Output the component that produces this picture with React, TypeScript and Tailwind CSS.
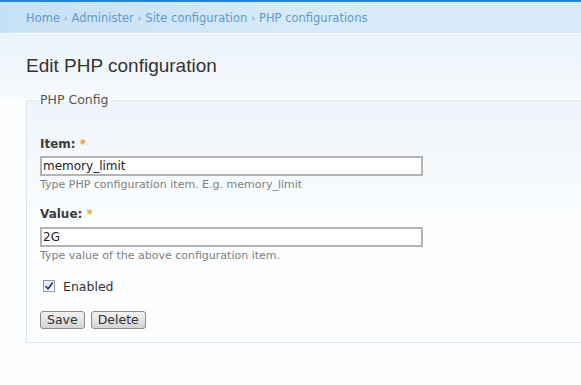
import React from 'react';

const font = { fontFamily: '"DejaVu Sans", Verdana, sans-serif' };

export default function App() {
  return (
    <div className="w-[581px] h-[385px] overflow-hidden bg-[#fdfeff] font-['DejaVu_Sans',Verdana,sans-serif] text-[#444]">
      <div className="h-[2px] bg-[#2f7fcf]" />
      <div className="h-[32px] flex items-center pl-[26px] pt-[2px] text-[11.5px] text-[#6498cc] bg-gradient-to-r from-[#c6e0f5] via-[#d6eaf8] to-[#d6eaf8] border-b border-[#f4f9fd] shadow-[0_1px_0_#e6eef5]">
        <span>Home</span>
        <span className="mx-[4px] text-[9px]">›</span>
        <span>Administer</span>
        <span className="mx-[4px] text-[9px]">›</span>
        <span>Site configuration</span>
        <span className="mx-[4px] text-[9px]">›</span>
        <span>PHP configurations</span>
      </div>
      <div className="bg-gradient-to-b from-[#eaf2fa] to-[#f7fafd] h-[65px] pl-[26px] pt-[20px]">
        <h1 className="font-['Liberation_Sans',Arial,sans-serif] text-[19px] text-[#333] leading-[24px]">Edit PHP configuration</h1>
      </div>
      <fieldset className="ml-[26px] -mt-[8px] border border-r-0 border-[#dde6ee] bg-gradient-to-b from-[#eef4fa] via-[#fbfdfe] to-[#fdfeff] pl-[13px] pr-0 pt-[26px] pb-[13px]">
        <legend className="-ml-[1px] px-[1px] text-[12.5px] text-[#555]" style={font}>PHP Config</legend>
        <div className="flex flex-col">
          <label className="text-[12px] font-bold text-[#3a3a3a] leading-[16px]">
            Item: <span className="text-[#f0a020]">*</span>
          </label>
          <input
            readOnly
            value="memory_limit"
            className="mt-[4px] w-[383px] h-[20px] border-2 border-[#b4b4b4] px-[1px] text-[12px] text-[#222] outline-none bg-white"
          />
          <div className="mt-[2px] text-[11px] text-[#808080] leading-[14px]">Type PHP configuration item. E.g. memory_limit</div>
          <label className="mt-[14px] text-[12px] font-bold text-[#3a3a3a] leading-[16px]">
            Value: <span className="text-[#f0a020]">*</span>
          </label>
          <input
            readOnly
            value="2G"
            className="mt-[5px] w-[383px] h-[20px] border-2 border-[#b4b4b4] px-[1px] text-[12px] text-[#222] outline-none bg-white"
          />
          <div className="mt-[2px] text-[11px] text-[#808080] leading-[14px]">Type value of the above configuration item.</div>
          <div className="mt-[16px] h-[18px] flex items-center pl-[3px]">
            <span className="-mt-[4px] w-[12px] h-[12px] border border-[#8e9bb0] bg-gradient-to-b from-[#e6e9ef] to-white flex items-center justify-center">
              <svg width="10" height="10" viewBox="0 0 10 10">
                <path d="M1.5 5 L4 7.8 L8.7 1.5" fill="none" stroke="#2b3f8f" strokeWidth="1.8" />
              </svg>
            </span>
            <span className="ml-[8px] text-[12.5px] text-[#333]">Enabled</span>
          </div>
          <div className="mt-[14px] flex gap-[6px]">
            <button className="h-[18px] px-[6px] rounded-[3px] border border-[#8a8a8a] bg-gradient-to-b from-[#f2f2f2] to-[#d4d4d4] text-[12.5px] leading-[14px] text-[#333]">Save</button>
            <button className="h-[18px] px-[6px] rounded-[3px] border border-[#8a8a8a] bg-gradient-to-b from-[#f2f2f2] to-[#d4d4d4] text-[12.5px] leading-[14px] text-[#333]">Delete</button>
          </div>
        </div>
      </fieldset>
    </div>
  );
}
